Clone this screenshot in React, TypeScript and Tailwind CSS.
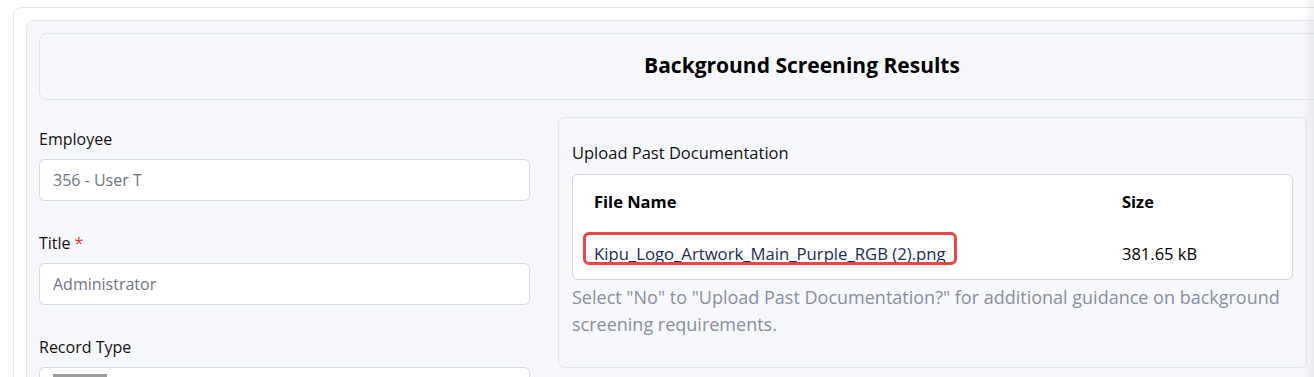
import React from "react";

const FONT = { fontFamily: '"Open Sans", "Noto Sans", Arial, sans-serif' };

const Field = ({
  label,
  value,
  required,
  children,
}: {
  label: string;
  value?: string;
  required?: boolean;
  children?: React.ReactNode;
}) => (
  <div className="mb-[28px]">
    <p className="mb-[8px] pt-[2px] text-[16px] leading-6 text-[#111]">
      {label}
      {required && <span className="ml-1 text-[#e53935]">*</span>}
    </p>
    <div className="flex h-[42px] items-center rounded-md border border-[#d6d9e3] bg-white px-[13px] text-[16px] text-[#6f7482]">
      {value}
      {children}
    </div>
  </div>
);

const App = () => {
  return (
    <div
      className="relative h-screen w-screen overflow-hidden bg-white"
      style={FONT}
    >
      {/* OUTER CARD */}
      <div className="ml-[13px] mt-[7px] w-[1578px] rounded-lg border border-[#e4e6ee] bg-white p-[12px]">
        {/* INNER PANEL */}
        <div className="rounded-lg border border-[#e4e6ee] bg-[#f7f8fc] p-[12px]">
          {/* HEADER */}
          <div className="flex h-[67px] items-center justify-center rounded-lg border border-[#e4e6ee] bg-[#f7f8fc]">
            <h1 className="-mt-[2px] text-[21px] font-bold text-black">
              Background Screening Results
            </h1>
          </div>

          <div className="mt-[17px] flex items-start gap-[28px]">
            {/* LEFT COLUMN */}
            <div className="w-[491px] pt-[8px]">
              <Field label="Employee" value="356 - User T" />
              <Field label="Title" value="Administrator" required />
              <Field label="Record Type">
                <div className="mt-[6px] h-[34px] w-[54px] self-start bg-[#9d9d9d]" />
              </Field>
            </div>

            {/* RIGHT COLUMN */}
            <div className="w-[749px] rounded-md border border-[#e4e6ee] bg-[#f7f8fc] px-[13px] pb-[29px] pt-[23px]">
              <p className="mb-[9px] text-[16.5px] leading-6 text-[#111]">
                Upload Past Documentation
              </p>
              <div className="rounded-md border border-[#d3d5dc] bg-white">
                <div className="flex h-[54px] items-center px-[21px] text-[16.5px] font-bold text-black">
                  <span className="w-[528px]">File Name</span>
                  <span>Size</span>
                </div>
                <div className="flex h-[50px] items-center px-[21px] text-[16px]">
                  <span className="relative w-[528px] leading-6">
                    <a
                      href="#"
                      className="text-[16.7px] text-[#1d2b4f] underline underline-offset-2"
                    >
                      Kipu_Logo_Artwork_Main_Purple_RGB (2).png
                    </a>
                    <span className="pointer-events-none absolute -left-[11px] -top-[10px] h-[33px] w-[374px] rounded-md border-[3px] border-[#f04444]" />
                  </span>
                  <span className="text-[16.5px] text-black">381.65 kB</span>
                </div>
              </div>
              <p className="mt-[4px] text-[18px] leading-[27px] text-[#8a8e9b]">
                Select "No" to "Upload Past Documentation?" for additional
                guidance on background screening requirements.
              </p>
            </div>
          </div>
        </div>
      </div>

      {/* right edge scroll shade */}
      <div className="pointer-events-none absolute right-0 top-0 h-full w-[12px] bg-gradient-to-r from-transparent to-[#0000000d]" />
    </div>
  );
};

export default App;
